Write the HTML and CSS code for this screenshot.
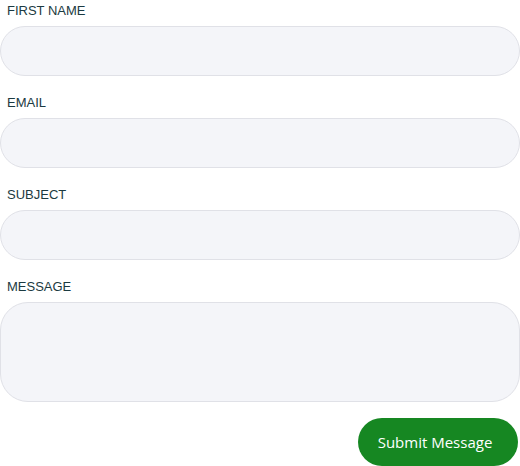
FILE: index.html
```
<!DOCTYPE html>
<html lang="en">
<head>
<meta charset="utf-8">
<title>Contact form</title>
<link rel="stylesheet" href="styles.css">
</head>
<body>
<form class="form">
  <div class="field">
    <label class="label" for="fname">FIRST NAME</label>
    <input class="input" id="fname" type="text">
  </div>
  <div class="field">
    <label class="label" for="email">EMAIL</label>
    <input class="input" id="email" type="email">
  </div>
  <div class="field">
    <label class="label" for="subject">SUBJECT</label>
    <input class="input" id="subject" type="text">
  </div>
  <div class="field">
    <label class="label" for="message">MESSAGE</label>
    <textarea class="input textarea" id="message"></textarea>
  </div>
  <div class="actions">
    <button class="submit" type="button">Submit Message</button>
  </div>
</form>
</body>
</html>
```
FILE: styles.css
```
html, body {
  margin: 0;
  padding: 0;
  background: #ffffff;
}
body {
  font-family: "Liberation Sans", Arial, sans-serif;
  width: 520px;
  height: 466px;
  overflow: hidden;
}
.form {
  display: flex;
  flex-direction: column;
  gap: 16px;
}
.field {
  display: flex;
  flex-direction: column;
}
.label {
  display: block;
  height: 26px;
  box-sizing: border-box;
  padding: 3px 0 0 7px;
  font-size: 13px;
  line-height: 16px;
  color: #1b3a41;
}
.input {
  display: block;
  box-sizing: border-box;
  width: 520px;
  height: 50px;
  margin: 0;
  padding: 0 20px;
  background: #f4f5f9;
  border: 1px solid #e0e1e7;
  border-radius: 25px;
  font-family: inherit;
  font-size: 15px;
  outline: none;
}
.textarea {
  height: 100px;
  border-radius: 28px;
  resize: none;
  padding: 14px 20px;
}
.actions {
  display: flex;
  justify-content: flex-end;
  padding-right: 2px;
}
.submit {
  width: 160px;
  height: 48px;
  border: none;
  border-radius: 24px;
  background: #168722;
  color: #ffffff;
  font-family: "Open Sans", "Liberation Sans", sans-serif;
  font-size: 15px;
  font-weight: 500;
  padding: 0 6px 0 0;
  cursor: pointer;
}
```
